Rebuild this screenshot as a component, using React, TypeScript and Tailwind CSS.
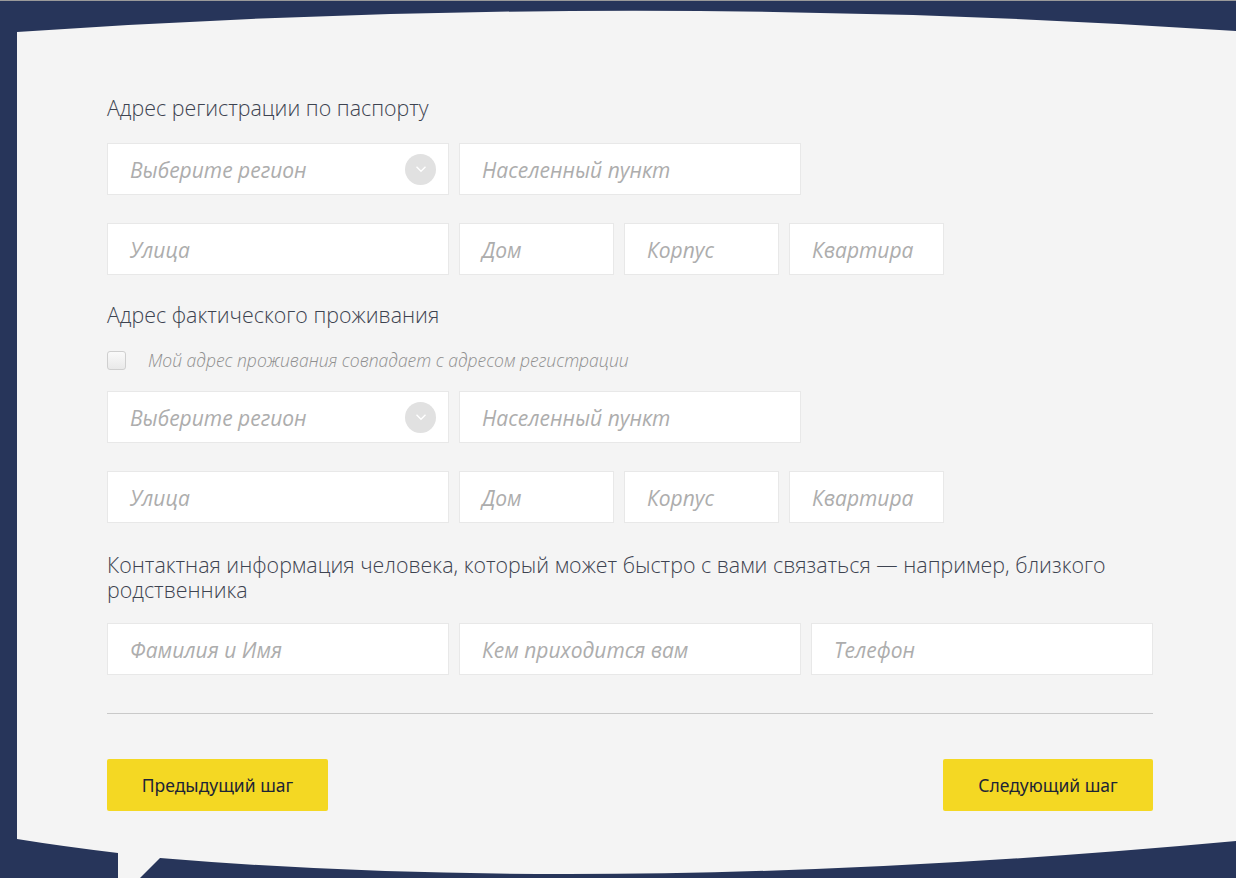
import React from "react";

const heading = "font-['Open_Sans',sans-serif] text-[21.4px] font-light leading-[25px] text-[#3d4350]";
const ph = "pt-[3px] font-['Open_Sans',sans-serif] text-[21px] italic font-medium text-[#adadad]";

function Field({ label, w, select }: { label: string; w: string; select?: boolean }) {
  return (
    <div
      className={`${w} flex h-[52px] items-center justify-between border border-[#e8e8e8] bg-white pl-[22px] pr-[12px]`}
    >
      <span className={ph}>{label}</span>
      {select && (
        <span className="flex h-[31px] w-[31px] items-center justify-center rounded-full bg-[#e1e1e1]">
          <svg width="12" height="8" viewBox="0 0 12 8" fill="none">
            <path d="M1.5 1.8 6 6.2l4.5-4.4" stroke="#fff" strokeWidth="1.4" />
          </svg>
        </span>
      )}
    </div>
  );
}

function Address() {
  return (
    <div className="flex flex-col gap-[28px]">
      <div className="flex gap-[10px]">
        <Field label="Выберите регион" w="w-[342px]" select />
        <Field label="Населенный пункт" w="w-[342px]" />
      </div>
      <div className="flex gap-[10px]">
        <Field label="Улица" w="w-[342px]" />
        <Field label="Дом" w="w-[155px]" />
        <Field label="Корпус" w="w-[155px]" />
        <Field label="Квартира" w="w-[155px]" />
      </div>
    </div>
  );
}

export default function App() {
  return (
    <div className="relative h-[878px] w-full overflow-hidden border-t border-[#9a9a9a] bg-[#27355a]">
      {/* форма карточки-облачка */}
      <svg className="absolute inset-0" width="1236" height="878" viewBox="0 0 1236 878">
        <path
          d="M17 31 Q626 -11 1236 30 L1236 840 Q626 896 160 857 L139 878 L118 878 L118 852 Q60 845 17 838 Z"
          fill="#f4f4f4"
        />
      </svg>

      <div className="relative ml-[107px] w-[1046px] pt-[94px]">
        <h2 className={heading}>Адрес регистрации по паспорту</h2>
        <div className="mt-[23px]">
          <Address />
        </div>

        <h2 className={`${heading} mt-[27px]`}>Адрес фактического проживания</h2>
        <label className="mt-[20px] flex items-center gap-[22px]">
          <span className="h-[19px] w-[19px] rounded-[3px] border border-[#cfcfcf] bg-gradient-to-b from-[#fafafa] to-[#e9e9e9]" />
          <span className="font-['Open_Sans',sans-serif] text-[17.5px] font-light italic text-[#8f8f8f]">
            Мой адрес проживания совпадает с адресом регистрации
          </span>
        </label>
        <div className="mt-[18px]">
          <Address />
        </div>

        <h2 className={`${heading} mt-[29px]`}>
          Контактная информация человека, который может быстро с вами связаться — например, близкого родственника
        </h2>
        <div className="mt-[21px] flex gap-[10px]">
          <Field label="Фамилия и Имя" w="w-[342px]" />
          <Field label="Кем приходится вам" w="w-[342px]" />
          <Field label="Телефон" w="w-[342px]" />
        </div>

        <div className="mt-[38px] h-px w-full bg-[#c9c9c9]" />

        <div className="mt-[45px] flex justify-between">
          <button className="h-[52px] w-[221px] rounded-[2px] bg-[#f4d823] font-['Noto_Sans',sans-serif] text-[17.5px] text-[#1d2436]">
            Предыдущий шаг
          </button>
          <button className="h-[52px] w-[210px] rounded-[2px] bg-[#f4d823] font-['Noto_Sans',sans-serif] text-[17.5px] text-[#1d2436]">
            Следующий шаг
          </button>
        </div>
      </div>
    </div>
  );
}
